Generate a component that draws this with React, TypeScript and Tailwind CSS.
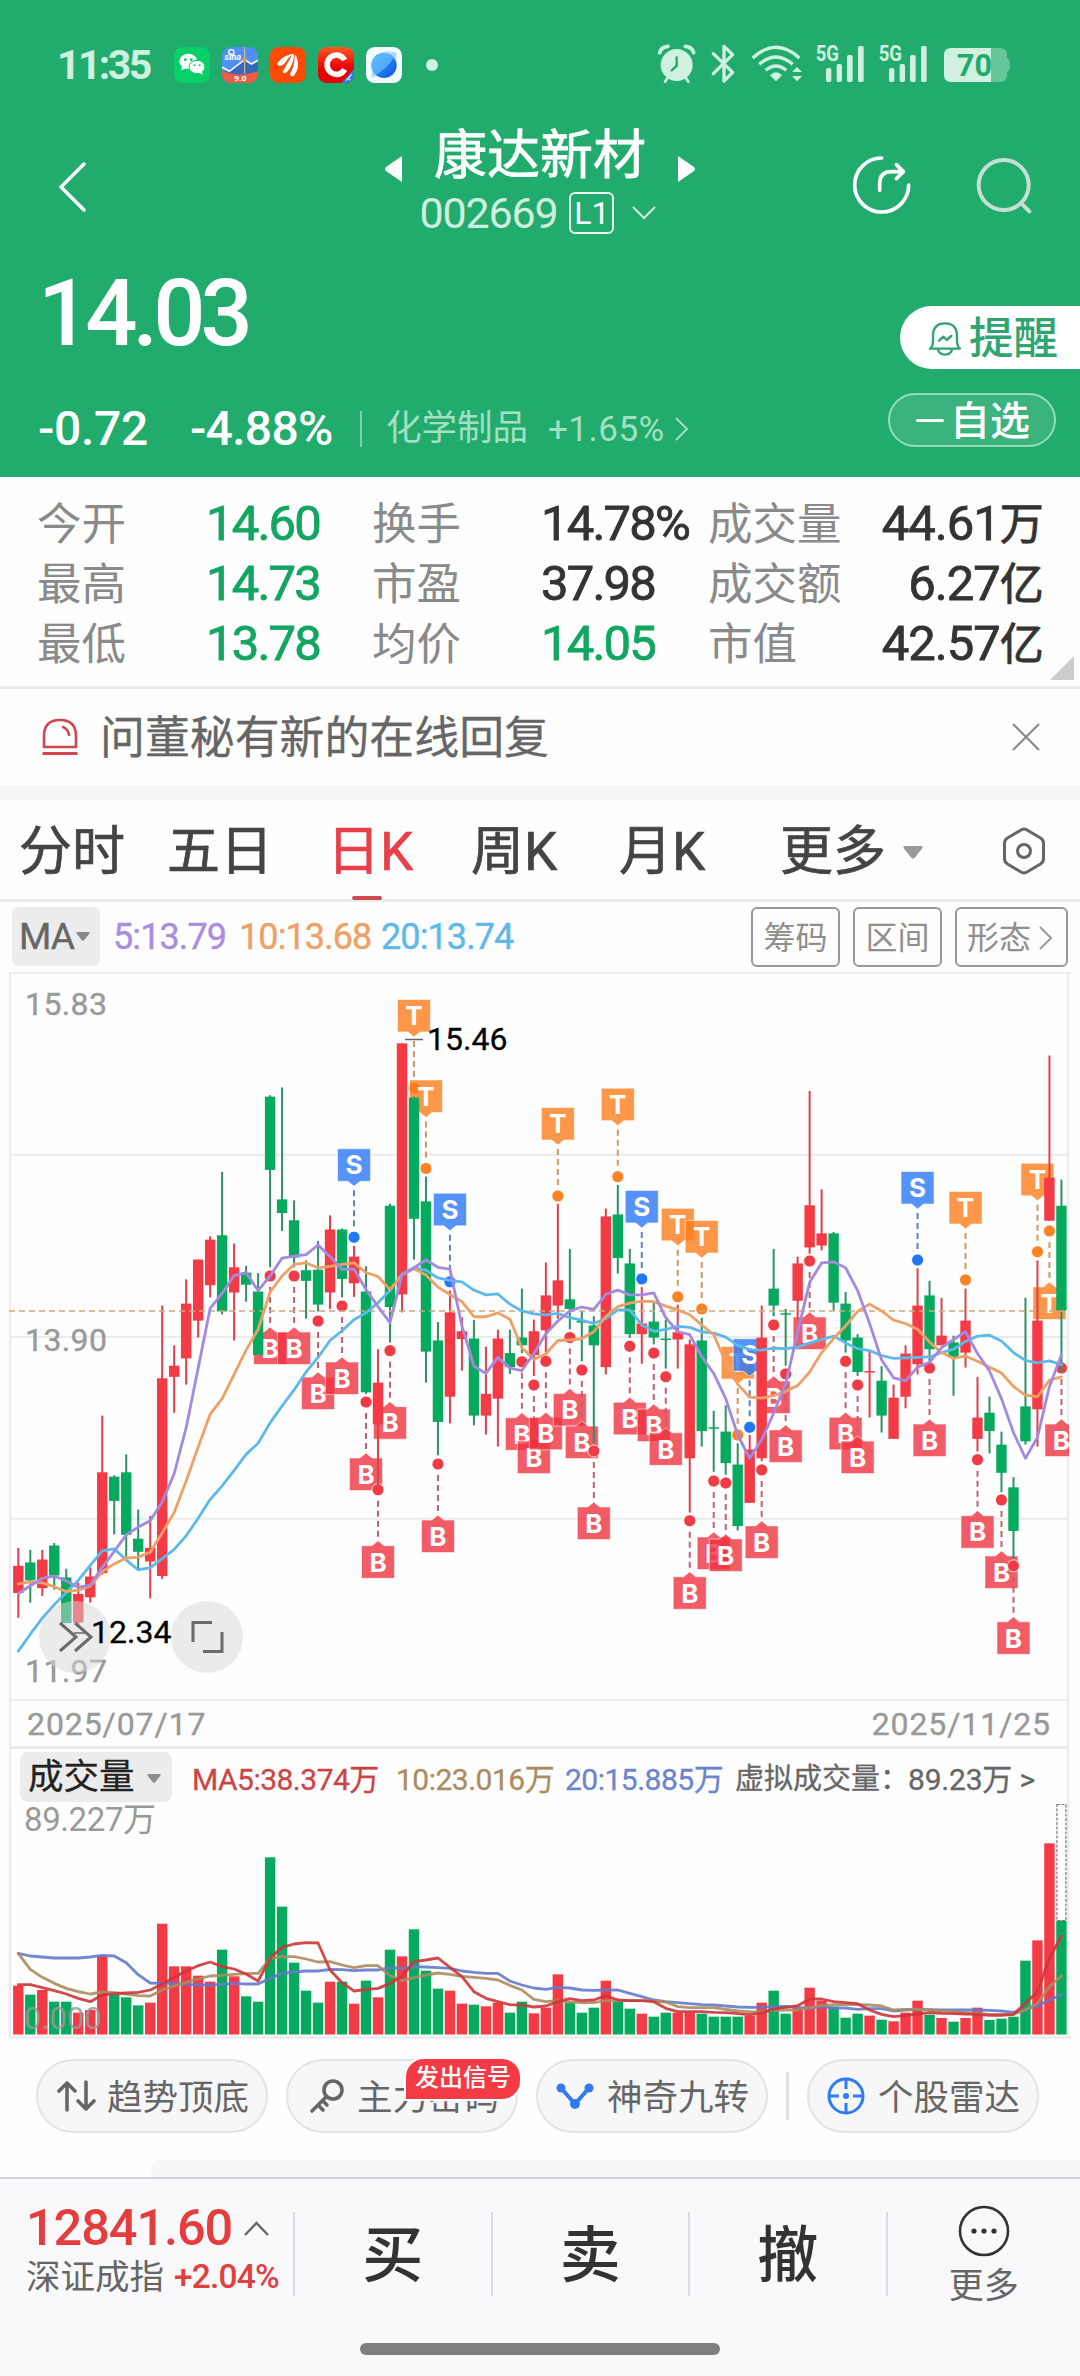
import type { ReactNode } from 'react';

type Candle = [high: number, top: number, bottom: number, low: number, color: 'R' | 'G', volume: number];

const RED = '#f43b45';
const GREEN = '#05aa5f';

// chart units: x is the bar index, y counts down from the plot origin
const px = (i: number) => 18.3 + i * 11.99;
const py = (v: number) => v / 2.0632;
const vy = (v: number) => v / 3;

const candles: Candle[] = [
  [1213, 1250, 1306, 1357, 'R', 917], [1217, 1243, 1280, 1326, 'G', 944], [1217, 1237, 1296, 1312, 'R', 930],
  [1203, 1208, 1270, 1299, 'G', 965], [1256, 1274, 1368, 1368, 'G', 965], [1285, 1308, 1367, 1372, 'R', 998],
  [1253, 1272, 1315, 1326, 'R', 990], [940, 1057, 1265, 1268, 'R', 828], [1063, 1066, 1116, 1185, 'G', 944],
  [1020, 1057, 1186, 1232, 'G', 952], [1134, 1194, 1221, 1257, 'G', 976], [1147, 1213, 1241, 1317, 'R', 968],
  [713, 863, 1271, 1277, 'R', 731], [795, 837, 860, 934, 'R', 859], [659, 709, 822, 876, 'R', 859],
  [618, 618, 744, 779, 'R', 887], [570, 577, 671, 696, 'R', 905], [437, 568, 725, 731, 'G', 809],
  [585, 634, 686, 785, 'R', 889], [631, 645, 670, 705, 'G', 949], [646, 684, 815, 815, 'G', 965],
  [279, 282, 433, 634, 'G', 532], [263, 494, 522, 559, 'G', 680], [496, 537, 614, 634, 'G', 848],
  [620, 640, 662, 740, 'G', 932], [580, 639, 711, 725, 'G', 968], [527, 556, 686, 720, 'R', 905],
  [554, 556, 658, 696, 'G', 905], [590, 612, 667, 695, 'R', 971], [632, 684, 892, 895, 'G', 902],
  [803, 872, 958, 1085, 'R', 952], [503, 507, 716, 789, 'G', 809], [172, 172, 690, 727, 'R', 829],
  [282, 284, 534, 618, 'G', 748], [447, 498, 808, 872, 'G', 872], [747, 785, 953, 1022, 'G', 926],
  [682, 727, 901, 956, 'R', 932], [737, 766, 782, 847, 'R', 971], [743, 781, 940, 960, 'G', 974],
  [798, 895, 940, 979, 'R', 979], [763, 781, 905, 1004, 'R', 968], [763, 811, 840, 854, 'G', 998],
  [678, 779, 795, 811, 'G', 965], [742, 766, 815, 858, 'R', 1000], [624, 692, 764, 815, 'R', 983],
  [503, 661, 713, 740, 'R', 883], [596, 700, 720, 762, 'G', 968], [725, 744, 748, 828, 'G', 998],
  [735, 754, 795, 997, 'G', 983], [513, 529, 840, 855, 'R', 902], [464, 525, 615, 647, 'G', 965],
  [596, 626, 772, 780, 'G', 986], [675, 750, 772, 833, 'R', 1001], [705, 746, 779, 793, 'G', 1010],
  [742, 781, 783, 843, 'G', 998], [711, 768, 783, 843, 'R', 998], [783, 793, 1028, 1140, 'R', 998],
  [738, 785, 972, 1004, 'G', 1001], [930, 964, 966, 1056, 'G', 1010], [919, 973, 1038, 1062, 'G', 1010],
  [997, 1041, 1168, 1177, 'G', 1010], [980, 1010, 1120, 1120, 'R', 1007], [713, 779, 1028, 1034, 'R', 968],
  [596, 678, 713, 735, 'G', 932], [720, 729, 731, 837, 'G', 1001], [612, 626, 703, 740, 'R', 983],
  [270, 506, 593, 606, 'R', 923], [473, 564, 589, 599, 'R', 962], [561, 564, 707, 723, 'G', 980],
  [685, 709, 785, 810, 'G', 1013], [772, 779, 850, 858, 'G', 1001], [808, 848, 851, 944, 'R', 1007],
  [838, 868, 940, 975, 'G', 1019], [876, 903, 988, 988, 'R', 1024], [795, 812, 901, 925, 'R', 998],
  [636, 713, 834, 855, 'R', 962], [662, 692, 803, 828, 'G', 1004], [697, 775, 795, 795, 'R', 1014],
  [775, 789, 820, 899, 'G', 1025], [678, 744, 810, 841, 'R', 1014], [860, 944, 988, 1014, 'R', 983],
  [901, 934, 972, 1018, 'G', 1020], [973, 1000, 1058, 1098, 'G', 1016], [1067, 1088, 1178, 1235, 'G', 1010],
  [697, 921, 993, 1000, 'G', 842], [620, 744, 927, 1004, 'R', 781], [197, 449, 538, 538, 'R', 490],
  [453, 507, 723, 850, 'G', 722],
];

const ma5 = [
  1307, 1291, 1276, 1271, 1281, 1294, 1290, 1253, 1220, 1186, 1170, 1157, 1118, 1060, 965, 842, 719, 688, 651, 645,
  682, 652, 615, 611, 608, 588, 612, 638, 638, 680, 715, 748, 650, 635, 619, 634, 638, 755, 838, 853,
  820, 842, 847, 812, 771, 745, 724, 716, 721, 690, 681, 691, 691, 687, 738, 767, 773, 818, 853, 905,
  980, 1028, 990, 935, 875, 768, 665, 625, 623, 635, 682, 750, 825, 862, 868, 840, 830, 800, 783, 767,
  812, 848, 905, 975, 1028, 985, 880, 815,
];
const ma10 = [
  1287, 1283, 1285, 1293, 1303, 1300, 1292, 1262, 1246, 1234, 1232, 1222, 1182, 1140, 1075, 1005, 937, 905, 855, 805,
  762, 685, 652, 628, 625, 635, 632, 628, 625, 645, 653, 680, 650, 637, 650, 675, 690, 705, 736, 736,
  728, 741, 800, 824, 813, 785, 784, 781, 767, 735, 715, 708, 704, 705, 714, 722, 732, 753, 773, 830,
  875, 902, 904, 899, 890, 878, 850, 810, 781, 755, 725, 710, 724, 743, 750, 762, 788, 810, 822, 817,
  828, 840, 852, 880, 898, 901, 867, 860,
];
const ma20 = [
  1426, 1391, 1358, 1330, 1305, 1280, 1249, 1219, 1215, 1238, 1258, 1254, 1235, 1216, 1188, 1152, 1113, 1085, 1053, 1020,
  997, 955, 920, 887, 850, 820, 785, 765, 742, 728, 707, 682, 648, 635, 640, 656, 661, 664, 681, 691,
  689, 710, 724, 730, 732, 729, 738, 743, 750, 740, 722, 722, 753, 766, 762, 756, 758, 767, 770, 778,
  795, 804, 805, 801, 802, 799, 790, 783, 776, 790, 802, 806, 816, 822, 821, 820, 819, 810, 803, 787,
  776, 774, 786, 810, 826, 831, 827, 835,
];

const vol5 = [
  914, 914, 923, 932, 942, 955, 965, 945, 941, 939, 937, 930, 912, 892, 873, 857, 846, 860, 867, 882,
  903, 835, 802, 792, 788, 789, 870, 908, 933, 929, 925, 910, 890, 845, 840, 834, 862, 890, 935, 955,
  965, 974, 975, 981, 978, 965, 956, 962, 960, 947, 960, 962, 962, 965, 985, 995, 995, 995, 997, 998,
  1001, 1004, 999, 987, 982, 977, 957, 957, 965, 968, 971, 990, 1003, 1010, 1007, 1002, 998, 1000, 1001, 1002,
  1003, 1006, 1006, 1003, 970, 935, 835, 768,
];
const vol10 = [
  820, 868, 892, 910, 925, 935, 942, 936, 938, 942, 947, 948, 930, 918, 907, 897, 888, 886, 883, 881,
  880, 835, 830, 830, 837, 846, 845, 855, 863, 857, 857, 887, 902, 893, 885, 879, 883, 889, 892, 895,
  900, 916, 930, 958, 965, 962, 966, 968, 968, 962, 962, 962, 962, 963, 966, 980, 983, 983, 983, 988,
  993, 995, 996, 990, 990, 990, 983, 976, 974, 974, 974, 975, 978, 990, 988, 988, 990, 993, 996, 998,
  1000, 1003, 1003, 1003, 990, 970, 920, 888,
];
const vol20 = [
  820, 828, 831, 834, 834, 834, 831, 826, 828, 848, 884, 909, 910, 911, 913, 915, 915, 913, 910, 912,
  912, 895, 880, 876, 873, 873, 868, 869, 872, 870, 870, 863, 865, 860, 861, 863, 865, 873, 877, 880,
  880, 903, 915, 924, 928, 922, 924, 930, 931, 930, 930, 940, 950, 960, 965, 968, 971, 974, 975, 978,
  981, 982, 982, 980, 979, 982, 985, 980, 984, 984, 988, 986, 986, 993, 990, 988, 989, 990, 990, 990,
  990, 991, 993, 997, 988, 978, 960, 945,
];

type Signal = { kind: 'B' | 'S' | 'T'; i: number; y: number; below?: boolean };

const signals: Signal[] = [
  { kind: 'B', i: 21, y: 652 }, { kind: 'B', i: 23, y: 652 }, { kind: 'B', i: 25, y: 745 }, { kind: 'B', i: 27, y: 714 },
  { kind: 'S', i: 28, y: 572 }, { kind: 'B', i: 29, y: 912 }, { kind: 'B', i: 30, y: 1093 }, { kind: 'B', i: 31, y: 806 },
  { kind: 'T', i: 33, y: 264 }, { kind: 'T', i: 34, y: 430 }, { kind: 'B', i: 35, y: 1040 }, { kind: 'S', i: 36, y: 664 },
  { kind: 'B', i: 42, y: 829 }, { kind: 'B', i: 43, y: 877 }, { kind: 'B', i: 44, y: 828 }, { kind: 'T', i: 45, y: 487 },
  { kind: 'B', i: 46, y: 779 }, { kind: 'B', i: 47, y: 846 }, { kind: 'B', i: 48, y: 1013 }, { kind: 'T', i: 50, y: 447 },
  { kind: 'B', i: 51, y: 797 }, { kind: 'S', i: 52, y: 658 }, { kind: 'B', i: 53, y: 811 }, { kind: 'B', i: 54, y: 860 },
  { kind: 'T', i: 55, y: 695 }, { kind: 'B', i: 56, y: 1157 }, { kind: 'T', i: 57, y: 720 }, { kind: 'B', i: 58, y: 1075 },
  { kind: 'B', i: 59, y: 1079 }, { kind: 'T', i: 60, y: 980 }, { kind: 'S', i: 61, y: 964 }, { kind: 'B', i: 62, y: 1052 },
  { kind: 'B', i: 63, y: 753 }, { kind: 'B', i: 64, y: 854 }, { kind: 'B', i: 66, y: 621 }, { kind: 'B', i: 69, y: 828 },
  { kind: 'B', i: 70, y: 877 }, { kind: 'S', i: 75, y: 619 }, { kind: 'B', i: 76, y: 842 }, { kind: 'T', i: 79, y: 660 },
  { kind: 'B', i: 80, y: 1031 }, { kind: 'B', i: 82, y: 1114 }, { kind: 'B', i: 83, y: 1250 }, { kind: 'T', i: 85, y: 602 },
  { kind: 'T', i: 86, y: 559, below: true }, { kind: 'B', i: 87, y: 842 },
];

const signalColor = {
  B: { tag: '#ef3340', dot: '#f03a45', line: '#c4606c' },
  S: { tag: '#2b78f8', dot: '#2277f3', line: '#5586bd' },
  T: { tag: '#ff7d1e', dot: '#fb8326', line: '#d29a5c' },
};

const toPoints = (data: number[], y: (v: number) => number) => data.map((v, i) => `${px(i)},${y(v)}`).join(' ');

function SignalTag({ kind, i, y, below }: Signal) {
  const c = signalColor[kind];
  const x = px(i);
  const cy = py(y);
  const dir = kind === 'B' || below ? 1 : -1;
  const near = cy + dir * 56;
  const far = cy + dir * 88.5;
  const tip = cy + dir * 51;
  return (
    <g>
      <line x1={x} x2={x} y1={cy + dir * 11} y2={tip} stroke={c.line} strokeWidth="2" strokeDasharray="6 4" />
      <path
        d={`M${x - 16.5} ${near}H${x - 6}L${x} ${tip}L${x + 6} ${near}H${x + 16.5}V${far}H${x - 16.5}Z`}
        fill={c.tag}
        fillOpacity="0.8"
        stroke="#fff"
        strokeOpacity="0.7"
        strokeWidth="0.8"
        strokeLinejoin="round"
      />
      <text x={x} y={(near + far) / 2 + 9.5} textAnchor="middle" fontSize="26" fontWeight="700" fontFamily="Inter, sans-serif" fill="#fff">
        {kind}
      </text>
      <circle cx={x} cy={cy} r="6" fill={c.dot} stroke="#fff" strokeWidth="0.8" />
    </g>
  );
}

function PriceChart() {
  return (
    <svg width="1080" height="729" viewBox="0 12 1080 729" className="block" fontFamily="Roboto, sans-serif">
      <defs>
        <clipPath id="plot">
          <rect x="0" y="12" width="1069" height="729" />
        </clipPath>
      </defs>
      <g stroke="#ebebeb" strokeWidth="2">
        <path d="M9 12.8H1071M10 194.8H1068M10 377H1068M10 558.8H1068M10 740H1068" />
        <path d="M10 12V741M1068 12V741" />
      </g>
      <g fontSize="32" fill="#999" letterSpacing="0.4" stroke="#999" strokeWidth="0.4">
        <text x="25" y="55">15.83</text>
        <text x="25" y="391">13.90</text>
        <text x="25" y="722">11.97</text>
      </g>
      <g clipPath="url(#plot)">
        {signals.map(s => (
          <SignalTag key={`${s.kind}-${s.i}`} {...s} />
        ))}
        {candles.map(([high, top, bottom, low, color], i) => (
          <g key={i} fill={color === 'R' ? RED : GREEN}>
            <rect x={px(i) - 1} y={py(high)} width="2" height={py(low - high)} fill={color === 'R' ? '#e0404b' : '#2f9164'} />
            <rect x={px(i) - 5.2} y={py(top)} width="10.4" height={Math.max(py(bottom - top), 1.5)} />
          </g>
        ))}
        <line x1="9" x2="1069" y1="351" y2="351" stroke="#c9ab7c" strokeWidth="1.4" strokeDasharray="6 4" />
        <g fill="none" strokeWidth="2.8" strokeLinejoin="round" strokeLinecap="round">
          <polyline points={toPoints(ma20, py)} stroke="#5cb9ea" />
          <polyline points={toPoints(ma10, py)} stroke="#eea166" />
          <polyline points={toPoints(ma5, py)} stroke="#a38ae0" />
        </g>
      </g>
      <path d="M405 79.5H423" stroke="#666" strokeWidth="1.5" />
      <text x="427" y="90" fontSize="32" fill="#000" stroke="#000" strokeWidth="0.3">15.46</text>

      {/* floating buttons */}
      <g fill="#d8d8d8" fillOpacity="0.5">
        <circle cx="75" cy="677" r="36" />
        <circle cx="207" cy="677" r="36" />
      </g>
      <g fill="none" stroke="#6b6b6b" strokeWidth="3">
        <path d="M60 663L76 677L60 691M75 663L91 677L75 691" />
        <path d="M74 673H87" strokeWidth="1.5" />
        <path d="M193 682V662.500H212M203 691.500H222V672" />
      </g>
      <text x="91" y="683" fontSize="32" fill="#000" stroke="#000" strokeWidth="0.3">12.34</text>
    </svg>
  );
}

function VolumeChart() {
  return (
    <svg width="1080" height="236" viewBox="0 124 1080 236" className="block" fontFamily="Roboto, 'Noto Sans CJK SC', sans-serif">
      <path d="M10 124V358M1068 124V358M9 357.500H1071" stroke="#ebebeb" strokeWidth="2.400" fill="none" />
      {candles.map(([, , , , color, v], i) => (
        <rect key={i} x={px(i) - 5.2} y={vy(v)} width="10.4" height={354.500 - vy(v)} fill={color === 'R' ? RED : GREEN} />
      ))}
      <rect x={px(87) - 4.500} y="124.500" width="9" height="116" fill="none" stroke="#777" strokeWidth="1.200" strokeDasharray="3 1.500" />
      <g fill="none" strokeWidth="2.800" strokeLinejoin="round" strokeLinecap="round" strokeOpacity="0.9">
        <polyline points={toPoints(vol20, vy)} stroke="#6479cc" />
        <polyline points={toPoints(vol10, vy)} stroke="#ab8c5f" />
        <polyline points={toPoints(vol5, vy)} stroke="#cf3438" />
      </g>
      <text x="24" y="349" fontSize="31" fill="#999" fillOpacity="0.850">0.000</text>
    </svg>
  );
}

function StatusIcons() {
  return (
    <svg width="400" height="70" viewBox="0 0 1200 210" fontFamily="Roboto, sans-serif">
      <g fill="#d0f0e0" stroke="#d0f0e0">
        <circle cx="110" cy="105" r="48" stroke="none" />
        <path d="M59 68Q64 50 84 49M161 68Q156 50 136 49" fill="none" strokeWidth="11" strokeLinecap="round" />
        <path d="M84 142L75 155M136 142L145 155" strokeWidth="8" strokeLinecap="round" />
        <path d="M110 82V107L95 121" fill="none" stroke="#21ac6e" strokeWidth="7" strokeLinecap="round" />
        <path d="M220 71L278 127L252 153V49L278 74L220 131" fill="none" strokeWidth="10" strokeLinejoin="round" strokeLinecap="round" />
        <path d="M338 84Q408 20 478 84M358 103Q408 59 458 103M377 121Q408 95 439 121" fill="none" strokeWidth="10" />
        <path d="M390 136Q408 117 426 136L408 154Z" stroke="none" />
        <path d="M456 126L471 111L486 126ZM456 138L471 154L486 138Z" stroke="none" />
        {[0, 189].map(dx => (
          <g key={dx} stroke="none" transform={`translate(${dx} 0)`}>
            <text x="527" y="93" fontSize="64" fontWeight="700" textLength="70" lengthAdjust="spacingAndGlyphs">5G</text>
            <rect x="558" y="114" width="16" height="42" rx="5" />
            <rect x="590" y="102" width="16" height="54" rx="5" />
            <rect x="621" y="75" width="17" height="81" rx="5" />
            <rect x="654" y="48" width="17" height="108" rx="5" />
          </g>
        ))}
      </g>
      <path d="M1053 54H1080Q1101 54 1101 75V84Q1110 86 1110 105Q1110 122 1101 125V135Q1101 156 1080 156H1053Z" fill="#65c69a" />
      <path d="M1053 54H933Q912 54 912 75V135Q912 156 933 156H1053Z" fill="#d0f0e0" />
      <text x="950" y="139" fontSize="92" fontWeight="700" fill="#21ac6e" textLength="106">70</text>
    </svg>
  );
}

function AppIcons() {
  return (
    <div className="flex gap-3">
      <svg width="36" height="36" viewBox="0 0 108 108">
        <rect width="108" height="108" rx="26" fill="#07d068" />
        <ellipse cx="43" cy="43" rx="27" ry="23" fill="#fff" />
        <path d="M24 56L22 70L38 63Z" fill="#fff" />
        <ellipse cx="69" cy="60" rx="24" ry="20" fill="#fff" stroke="#07d068" strokeWidth="3" />
        <path d="M74 76L86 83L83 70Z" fill="#fff" />
        <g fill="#07c562">
          <circle cx="34" cy="38" r="4" /><circle cx="52" cy="38" r="4" />
          <circle cx="61" cy="55" r="3" /><circle cx="77" cy="55" r="3" />
        </g>
      </svg>
      <svg width="36" height="36" viewBox="0 0 108 108" fontFamily="Roboto, sans-serif">
        <defs>
          <clipPath id="sina"><rect width="108" height="108" rx="26" /></clipPath>
        </defs>
        <g clipPath="url(#sina)">
          <rect width="108" height="108" fill="#4f90f5" />
          <path d="M0 75L20 70L68 38L86 50L108 38V108H0Z" fill="#3768bd" />
          <path d="M0 72Q54 94 108 72V108H0Z" fill="#ef5c46" />
          <path d="M0 60L22 73L68 38L88 51L108 40" fill="none" stroke="#fff" strokeWidth="5" />
          <path d="M68 0V80" stroke="#e7c48c" strokeWidth="3" />
          <circle cx="68" cy="38" r="6" fill="#f79a2b" />
          <circle cx="28" cy="16" r="8" fill="none" stroke="#fff" strokeWidth="4" />
          <text x="7" y="38" fontSize="28" fontWeight="700" fontStyle="italic" fill="#fff" textLength="50">sina</text>
          <text x="36" y="101" fontSize="20" fontWeight="700" fill="#fff" textLength="38" lengthAdjust="spacingAndGlyphs">9.0</text>
        </g>
      </svg>
      <svg width="36" height="36" viewBox="0 0 108 108" fill="#fff">
        <rect width="108" height="108" rx="26" fill="#ff4a05" />
        <path d="M22 48Q40 22 75 20Q55 28 48 44Q38 58 28 56Q20 54 22 48Z" />
        <path d="M38 74Q52 50 66 24Q72 20 72 30Q68 58 50 76Q42 82 38 74Z" />
        <path d="M60 80Q74 58 74 28Q78 18 80 32Q92 60 72 86Q62 92 60 80Z" />
      </svg>
      <svg width="36" height="36" viewBox="0 0 108 108">
        <defs>
          <linearGradient id="cred" x2="0" y2="1"><stop stopColor="#ff5a1f" /><stop offset="0.6" stopColor="#e60005" /></linearGradient>
          <clipPath id="cclip"><rect width="108" height="108" rx="26" /></clipPath>
        </defs>
        <g clipPath="url(#cclip)">
          <rect width="108" height="108" fill="url(#cred)" />
          <path d="M70 108L108 66V108Z" fill="#2f7fe0" />
          <path d="M80 39A28 29 0 1 0 80 67" fill="none" stroke="#fff" strokeWidth="17" />
          <path d="M84 101L101 82M90 93L97 100" stroke="#cfe4ff" strokeWidth="4" />
        </g>
      </svg>
      <svg width="36" height="36" viewBox="0 0 108 108">
        <defs>
          <linearGradient id="globe" x2="1" y2="1"><stop stopColor="#39b3ff" /><stop offset="1" stopColor="#0a50e0" /></linearGradient>
        </defs>
        <rect width="108" height="108" rx="26" fill="#f4fbff" />
        <path d="M92 16Q78 16 64 28L84 46Q94 32 92 16ZM16 92Q28 92 42 82L22 64Q14 80 16 92Z" fill="#bfe2ff" />
        <circle cx="54" cy="55" r="38" fill="url(#globe)" />
        <path d="M20 88Q58 74 91 20Q68 6 40 20Q6 42 20 76Z" fill="#7fd0ff" fillOpacity="0.55" />
      </svg>
    </div>
  );
}

function Triangle({ className }: { className: string }) {
  return (
    <svg viewBox="0 0 20 13" className={className}>
      <path d="M2 0H18Q20.500 0 19 2.500L12 11.500Q10 13.500 8 11.500L1 2.500Q-.5 0 2 0Z" fill="currentColor" />
    </svg>
  );
}

function Header() {
  return (
    <header className="flex h-[477px] flex-col bg-[#21ac6e] text-white">
      <div className="flex h-[120px] items-center pt-[10px] pl-[57px]">
        <span className="w-[117px] text-[41px] leading-none font-bold tracking-[-2.6px] text-[#d0f0e0]">11:35</span>
        <AppIcons />
        <span className="ml-6 h-3 w-3 rounded-full bg-[#d0f0e0]" />
        <div className="ml-[202px] shrink-0"><StatusIcons /></div>
      </div>

      <div className="flex h-[130px] items-center">
        <svg width="28" height="50" viewBox="0 0 28 50" className="mt-1 ml-[58px]">
          <path d="M26 2L3 25L26 48" fill="none" stroke="#fff" strokeWidth="3.500" strokeLinejoin="round" strokeLinecap="round" />
        </svg>
        <svg width="18" height="26" viewBox="0 0 18 26" className="-mt-8 ml-[298px]">
          <path d="M18 0V26L2 15Q0 13 2 11Z" fill="#fff" />
        </svg>
        <div className="flex h-full w-[276px] flex-col items-center pt-[6px]">
          <h1 className="flex h-[60px] items-center text-[53px] leading-none [-webkit-text-stroke:0.8px]">康达新材</h1>
          <div className="mt-[5px] mr-1 flex h-11 items-center">
            <span className="text-[43px] leading-none tracking-[-1.2px] text-[#cfeede]">002669</span>
            <span className="ml-3 flex h-[42px] w-[45px] items-center justify-center rounded-md border-2 border-[#e8f8f0] text-[32px] leading-none">L1</span>
            <svg width="24" height="14" viewBox="0 0 24 14" className="ml-[18px]">
              <path d="M1 1L12 12L23 1" fill="none" stroke="#cfeede" strokeWidth="2" />
            </svg>
          </div>
        </div>
        <svg width="18" height="26" viewBox="0 0 18 26" className="-mt-8">
          <path d="M0 0V26L16 15Q18 13 16 11Z" fill="#fff" />
        </svg>
        <svg width="60" height="60" viewBox="0 0 180 180" className="ml-[155px]" fill="none" stroke="#fff" strokeWidth="11" strokeLinecap="round" strokeLinejoin="round">
          <path d="M92 9A81 81 0 1 0 173 90" />
          <path d="M86 106V85Q86 50 122 50H155M136 29L157 50L136 71" />
        </svg>
        <svg width="58" height="60" viewBox="0 0 174 180" className="ml-[64px]" fill="none" stroke="#c5dfd2" strokeWidth="12" strokeLinecap="round">
          <circle cx="86" cy="90" r="75" />
          <path d="M139 145L163 169" />
        </svg>
      </div>

      <div className="flex flex-1 justify-between">
        <div className="flex flex-col pl-[38px]">
          <span className="mt-4 flex h-[96px] items-center text-[92px] leading-none font-medium tracking-[-5px]">14.03</span>
          <div className="mt-[42px] flex h-[50px] items-center whitespace-nowrap">
            <span className="w-[152px] text-[48px] leading-none font-medium tracking-[-0.3px]">-0.72</span>
            <span className="w-[170px] text-[48px] leading-none font-medium tracking-[-0.7px]">-4.88%</span>
            <span className="h-[36px] w-[2px] bg-[#7fcfa8]" />
            <span className="ml-6 text-[35.500px] leading-none text-[#a2dfc3]">化学制品</span>
            <span className="ml-5 text-[35px] leading-none tracking-[0.5px] text-[#a2dfc3]">+1.65%</span>
            <svg width="14" height="24" viewBox="0 0 14 24" className="ml-2.5">
              <path d="M1 1L12 12L1 23" fill="none" stroke="#a2dfc3" strokeWidth="2" />
            </svg>
          </div>
        </div>
        <div className="flex flex-col items-end pt-[56px]">
          <div className="flex h-[63px] w-[180px] items-center rounded-l-full bg-white pl-7 text-[#2fa571]">
            <svg width="34" height="36" viewBox="0 0 102 108" fill="none" stroke="currentColor" strokeWidth="7" strokeLinejoin="round" strokeLinecap="round">
              <path d="M6 86Q14 80 15 66V48Q15 10 51 10Q87 10 87 48V66Q88 80 96 86Z" />
              <path d="M30 90Q36 104 51 104Q66 104 72 90" />
              <path d="M33 62L46 50L56 60L70 48" />
            </svg>
            <span className="ml-[7px] pt-[3px] text-[44.500px] leading-none font-medium">提醒</span>
          </div>
          <div className="mt-[24px] mr-6 flex h-[54px] w-[168px] items-center rounded-full border-2 border-[#8fe0b9] bg-[#3bb37f] pl-[26px]">
            <span className="h-[3px] w-[28px] rounded-full bg-white" />
            <span className="ml-[6px] pt-[3px] text-[40px] leading-none font-medium">自选</span>
          </div>
        </div>
      </div>
    </header>
  );
}

const quotes = [
  [['今开', '14.60', true], ['换手', '14.78%', false], ['成交量', '44.61万']],
  [['最高', '14.73', true], ['市盈', '37.98', false], ['成交额', '6.27亿']],
  [['最低', '13.78', true], ['均价', '14.05', true], ['市值', '42.57亿']],
] as const;

function Quotes() {
  return (
    <section className="relative flex h-[212px] flex-col border-b-[3px] border-[#ebebeb] pt-[16px] text-[49px] leading-none tracking-[-1.8px] text-[#333] [-webkit-text-stroke:0.8px]">
      {quotes.map(([a, b, c]) => (
        <div key={a[0]} className="flex h-[60px] items-center whitespace-nowrap">
          <QuoteLabel className="ml-[37px] w-[169px]">{a[0]}</QuoteLabel>
          <span className="w-[166px] text-[#12a660]">{a[1]}</span>
          <QuoteLabel className="w-[169px]">{b[0]}</QuoteLabel>
          <span className={b[2] ? 'w-[167px] text-[#12a660]' : 'w-[167px]'}>{b[1]}</span>
          <QuoteLabel className="w-[140px]">{c[0]}</QuoteLabel>
          <span className="w-[194px] text-right">
            <span className="tracking-[-1px]">{c[1].slice(0, -1)}</span>
            <span className="text-[44px]">{c[1].slice(-1)}</span>
          </span>
        </div>
      ))}
      <svg width="24" height="24" viewBox="0 0 24 24" className="absolute right-[6px] bottom-[6px]">
        <path d="M24 0V24H0Z" fill="#ccc" />
      </svg>
    </section>
  );
}

function QuoteLabel({ className, children }: { className: string; children: ReactNode }) {
  return (
    <span className={className}>
      <span className="text-[44.500px] tracking-normal text-[#8a8a8a] [-webkit-text-stroke:0]">{children}</span>
    </span>
  );
}

function Notice() {
  return (
    <section className="flex h-[96px] items-center pl-[42px]">
      <svg width="36" height="38" viewBox="0 0 36 38" fill="none" stroke="#d1474f" strokeWidth="2.600">
        <path d="M2 29V18Q2 2 18 2Q34 2 34 18V29Z" strokeLinejoin="round" />
        <path d="M21 9Q26 11 27 17" strokeLinecap="round" />
        <path d="M0.500 35.500H35.500" strokeWidth="3" />
      </svg>
      <span className="ml-[22px] pt-1 text-[44.900px] leading-none text-[#666] [-webkit-text-stroke:0.3px]">问董秘有新的在线回复</span>
      <svg width="28" height="28" viewBox="0 0 28 28" className="ml-auto mr-[40px]">
        <path d="M1 1L27 27M27 1L1 27" stroke="#8a8a8a" strokeWidth="2.200" />
      </svg>
    </section>
  );
}

function Tabs() {
  return (
    <nav className="flex h-[102px] items-center border-b-[3px] border-[#ebebeb] pt-1.5 text-[53px] leading-none text-[#444] [-webkit-text-stroke:0.7px]">
      <span className="ml-[19px] w-[148px]">分时</span>
      <span className="w-[160px]">五日</span>
      <span className="relative flex h-full w-[144px] items-center text-[#ea3f49]">
        日K
        <span className="absolute -bottom-px left-[25px] h-1 w-[30px] rounded-sm bg-[#d1474f]" />
      </span>
      <span className="w-[148px]">周K</span>
      <span className="w-[161px]">月K</span>
      <span>更多</span>
      <Triangle className="ml-[17px] h-[13px] w-5 text-[#999]" />
      <svg width="42" height="48" viewBox="0 0 42 48" className="-mt-1 ml-[80px]" fill="none" stroke="#666" strokeWidth="3">
        <path d="M18 3Q21 1.200 24 3L37.500 11Q40.500 13 40.500 16V32Q40.500 35 37.500 37L24 45Q21 46.800 18 45L4.500 37Q1.500 35 1.500 32V16Q1.500 13 4.500 11Z" />
        <circle cx="21" cy="24" r="6.500" />
      </svg>
    </nav>
  );
}

function MaBar() {
  return (
    <div className="flex h-[70px] items-center pb-px pl-3 text-[36px] leading-none tracking-[-0.9px] [-webkit-text-stroke:0.4px]">
      <div className="flex h-[59px] w-[88px] items-center rounded-md bg-[#ececec] pl-[7px] text-[37px] tracking-[-1px] text-[#666]">
        MA
        <Triangle className="ml-0.5 h-[9px] w-[14px] text-[#888]" />
      </div>
      <span className="ml-[13px] w-[126px] text-[#a98ee0]">5:13.79</span>
      <span className="w-[142px] text-[#eea166]">10:13.68</span>
      <span className="text-[#5cb9ea]">20:13.74</span>
      <div className="mr-3 ml-auto flex gap-[13px] text-[32px] tracking-normal text-[#8f8f8f] [-webkit-text-stroke:0]">
        <span className="flex h-[60px] w-[89px] items-center justify-center rounded-md border-2 border-[#999] pt-0.5">筹码</span>
        <span className="flex h-[60px] w-[89px] items-center justify-center rounded-md border-2 border-[#999] pt-0.5">区间</span>
        <span className="flex h-[60px] w-[113px] items-center rounded-md border-2 border-[#999] pt-0.5 pl-2.5">
          形态
          <svg width="14" height="24" viewBox="0 0 14 24" className="ml-2">
            <path d="M1 1L12 12L1 23" fill="none" stroke="#999" strokeWidth="2" />
          </svg>
        </span>
      </div>
    </div>
  );
}

function VolumeHeader() {
  return (
    <div className="mr-[11px] ml-[9px] flex h-[55px] items-center border-x-2 border-[#ebebeb] pl-[9px] text-[30px] leading-none tracking-[-0.5px] whitespace-nowrap [-webkit-text-stroke:0.3px]">
      <div className="flex h-[50px] w-[152px] items-center rounded-lg bg-[#ececec] pt-[3px] pl-2 text-[35.500px] tracking-normal text-[#222]">
        成交量
        <Triangle className="ml-3 h-[9px] w-[14px] text-[#8c8c8c]" />
      </div>
      <span className="ml-[20px] w-[204px] pt-1.5 text-[#cc4444]">MA5:38.374万</span>
      <span className="w-[169px] pt-1.5 text-[#ab8c5f]">10:23.016万</span>
      <span className="w-[170px] pt-1.5 text-[#6c84cf]">20:15.885万</span>
      <span className="w-[173px] pt-1.5 text-[29px] tracking-normal text-[#666]">虚拟成交量：</span>
      <span className="pt-1.5 tracking-[-0.2px] text-[#666]">89.23万 &gt;</span>
    </div>
  );
}

function Tool({ icon, label, badge }: { icon: ReactNode; label: string; badge?: string }) {
  return (
    <div className="relative flex h-[74px] w-[232px] items-center rounded-full border-2 border-[#e4e4e4] bg-[#f7f7f7] pl-[18px]">
      <span className="w-[51px]">{icon}</span>
      <span className="pt-1.5 text-[35.500px] leading-none text-[#666]">{label}</span>
      {badge && (
        <span className="absolute -top-1 -right-1.5 flex h-[44px] w-[118px] items-center justify-center rounded-[20px] rounded-bl-none border-2 border-white bg-[#f43b45] pb-0.5 text-[24px] leading-none font-medium text-white">
          {badge}
        </span>
      )}
    </div>
  );
}

function Tools() {
  return (
    <div className="flex items-center gap-[18px] pt-[19px] pl-9">
      <Tool
        label="趋势顶底"
        icon={
          <svg width="40" height="36" viewBox="0 0 40 36" fill="none" stroke="#666" strokeWidth="3.600" strokeLinecap="round" strokeLinejoin="round">
            <path d="M11 32V5M3 13L11 5L19 13M30 4V31M22 23L30 31L38 23" />
          </svg>
        }
      />
      <Tool
        label="主力密码"
        badge="发出信号"
        icon={
          <svg width="40" height="36" viewBox="0 0 40 36" fill="none" stroke="#666" strokeWidth="3.600" strokeLinecap="round">
            <circle cx="27" cy="12" r="9" />
            <path d="M20 19L6 33M12 27L17 32M17 23L21 27" />
          </svg>
        }
      />
      <Tool
        label="神奇九转"
        icon={
          <svg width="38" height="32" viewBox="0 0 38 32" fill="#2f7bf6">
            <path d="M5 8L19 24L33 8" fill="none" stroke="#2f7bf6" strokeWidth="4" />
            <circle cx="5" cy="8" r="4.500" /><circle cx="19" cy="24" r="5" /><circle cx="33" cy="8" r="4.500" />
          </svg>
        }
      />
      <span className="h-12 w-[3px] bg-[#e2e2e2]" />
      <Tool
        label="个股雷达"
        icon={
          <svg width="38" height="38" viewBox="0 0 38 38" fill="none" stroke="#2f7bf6" strokeWidth="3">
            <circle cx="19" cy="19" r="17" />
            <path d="M19 3V12M19 26V35M3 19H12M26 19H35" />
            <circle cx="19" cy="19" r="3" fill="#2f7bf6" stroke="none" />
          </svg>
        }
      />
    </div>
  );
}

function BottomBar() {
  return (
    <footer className="flex flex-1 flex-col border-t-2 border-[#d2d2d6] bg-[#f9f9fc]">
      <div className="mt-[33px] flex h-[84px] items-center">
        <div className="-mt-[11px] flex w-[293px] flex-col pl-[26px] whitespace-nowrap">
          <div className="flex items-center">
            <span className="text-[50.500px] leading-none font-medium tracking-[-1.1px] text-[#e53c3c]">12841.60</span>
            <svg width="25" height="16" viewBox="0 0 25 16" className="mt-0.5 ml-3">
              <path d="M1 14L12.500 2L24 14" fill="none" stroke="#666" strokeWidth="2.400" />
            </svg>
          </div>
          <div className="mt-[6px] flex items-center">
            <span className="text-[34.500px] leading-none text-[#666]">深证成指</span>
            <span className="ml-2.5 text-[33.500px] leading-none font-medium tracking-[-0.8px] text-[#e04040]">+2.04%</span>
          </div>
        </div>
        <Trade>买</Trade>
        <Trade>卖</Trade>
        <Trade>撤</Trade>
        <div className="flex h-[84px] flex-1 flex-col items-center border-l-2 border-[#dcdce0]">
          <svg width="52" height="52" viewBox="0 0 52 52" className="-mt-[7px] shrink-0">
            <circle cx="26" cy="26" r="24" fill="none" stroke="#333" strokeWidth="2.600" />
            <g fill="#333">
              <circle cx="16" cy="26" r="2.600" /><circle cx="26" cy="26" r="2.600" /><circle cx="36" cy="26" r="2.600" />
            </g>
          </svg>
          <span className="mt-[12px] text-[35px] leading-none text-[#666]">更多</span>
        </div>
      </div>
      <div className="mx-auto mt-[47px] h-3 w-[360px] rounded-full bg-[#7f7f7f]" />
    </footer>
  );
}

function Trade({ children }: { children: ReactNode }) {
  return (
    <button className="flex h-[84px] w-[197.500px] items-center justify-center border-l-2 border-[#dcdce0] pt-1 text-[61px] leading-none font-medium text-[#333]">
      {children}
    </button>
  );
}

export default function App() {
  return (
    <div className="flex h-[2376px] w-[1080px] flex-col overflow-hidden bg-[#fefefe] font-[Roboto,'Noto_Sans_CJK_SC',sans-serif]">
      <Header />
      <Quotes />
      <Notice />
      <div className="h-[15px] shrink-0 bg-[#f7f7f7]" />
      <Tabs />
      <MaBar />
      <PriceChart />
      <div className="mr-[11px] ml-[9px] flex h-[48px] items-center justify-between border-x-2 border-b-[3px] border-[#ebebeb] pr-[16px] pl-[16px] text-[32px] leading-none tracking-[0.9px] text-[#999] [-webkit-text-stroke:0.4px]">
        <span>2025/07/17</span>
        <span>2025/11/25</span>
      </div>
      <VolumeHeader />
      <div className="relative">
        <VolumeChart />
        <span className="absolute -top-px left-6 text-[33px] leading-none tracking-[-0.4px] text-[#999]">89.227万</span>
      </div>
      <Tools />
      <div className="mt-[27px] ml-[150px] h-[17px] shrink-0 rounded-tl-xl bg-[#f7f7f7]" />
      <BottomBar />
    </div>
  );
}
